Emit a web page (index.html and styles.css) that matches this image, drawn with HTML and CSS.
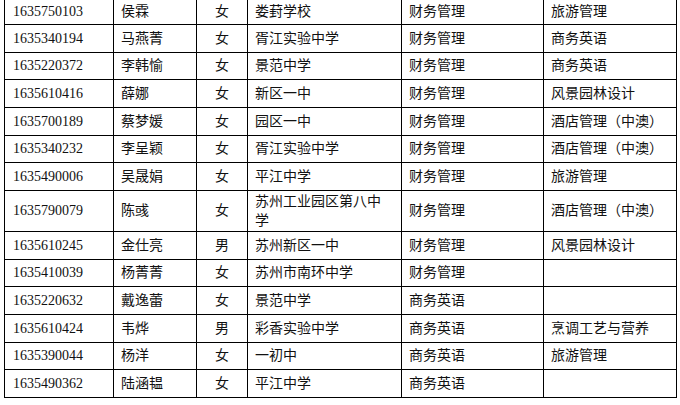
FILE: index.html
```html
<!DOCTYPE html>
<html lang="zh-CN">
<head>
<meta charset="utf-8">
<link rel="stylesheet" href="styles.css">
</head>
<body>
<table class="roster">
  <colgroup>
    <col class="c-id"><col class="c-name"><col class="c-sex"><col class="c-school"><col class="c-major1"><col class="c-major2">
  </colgroup>
  <tbody>
    <tr class="first"><td>1635750103</td><td>侯霖</td><td class="sex">女</td><td>娄葑学校</td><td>财务管理</td><td>旅游管理</td></tr>
    <tr><td>1635340194</td><td>马燕菁</td><td class="sex">女</td><td>胥江实验中学</td><td>财务管理</td><td>商务英语</td></tr>
    <tr><td>1635220372</td><td>李韩愉</td><td class="sex">女</td><td>景范中学</td><td>财务管理</td><td>商务英语</td></tr>
    <tr><td>1635610416</td><td>薛娜</td><td class="sex">女</td><td>新区一中</td><td>财务管理</td><td>风景园林设计</td></tr>
    <tr><td>1635700189</td><td>蔡梦媛</td><td class="sex">女</td><td>园区一中</td><td>财务管理</td><td>酒店管理（中澳）</td></tr>
    <tr><td>1635340232</td><td>李呈颖</td><td class="sex">女</td><td>胥江实验中学</td><td>财务管理</td><td>酒店管理（中澳）</td></tr>
    <tr><td>1635490006</td><td>吴晟娟</td><td class="sex">女</td><td>平江中学</td><td>财务管理</td><td>旅游管理</td></tr>
    <tr><td>1635790079</td><td>陈彧</td><td class="sex">女</td><td>苏州工业园区第八中学</td><td>财务管理</td><td>酒店管理（中澳）</td></tr>
    <tr><td>1635610245</td><td>金仕亮</td><td class="sex">男</td><td>苏州新区一中</td><td>财务管理</td><td>风景园林设计</td></tr>
    <tr><td>1635410039</td><td>杨菁菁</td><td class="sex">女</td><td>苏州市南环中学</td><td>财务管理</td><td></td></tr>
    <tr><td>1635220632</td><td>戴逸蕾</td><td class="sex">女</td><td>景范中学</td><td>商务英语</td><td></td></tr>
    <tr><td>1635610424</td><td>韦烨</td><td class="sex">男</td><td>彩香实验中学</td><td>商务英语</td><td>烹调工艺与营养</td></tr>
    <tr><td>1635390044</td><td>杨洋</td><td class="sex">女</td><td>一初中</td><td>商务英语</td><td>旅游管理</td></tr>
    <tr><td>1635490362</td><td>陆涵韫</td><td class="sex">女</td><td>平江中学</td><td>商务英语</td><td></td></tr>
  </tbody>
</table>
</body>
</html>
```
FILE: styles.css
```css
html, body {
  margin: 0;
  padding: 0;
  background: #fff;
}
body {
  padding-left: 4px;
}
.roster {
  border-collapse: collapse;
  table-layout: fixed;
  width: 672px;
  margin-top: -2px;
  font-family: "Liberation Serif", "Noto Sans CJK SC", serif;
  font-size: 14px;
  color: #111;
}
.c-id { width: 109px; }
.c-name { width: 83px; }
.c-sex { width: 51px; }
.c-school { width: 154px; }
.c-major1 { width: 142px; }
.c-major2 { width: 133px; }
.roster tr {
  height: 27.67px;
}
.roster tr.first {
  height: 26px;
}
.roster td {
  border: 1px solid #000;
  padding: 1px 8px 1px 7px;
  line-height: 19px;
  vertical-align: middle;
  white-space: normal;
}
.roster td:first-child {
  padding-left: 8px;
}
.roster td.sex {
  text-align: center;
  padding-left: 0;
  padding-right: 0;
}
```
